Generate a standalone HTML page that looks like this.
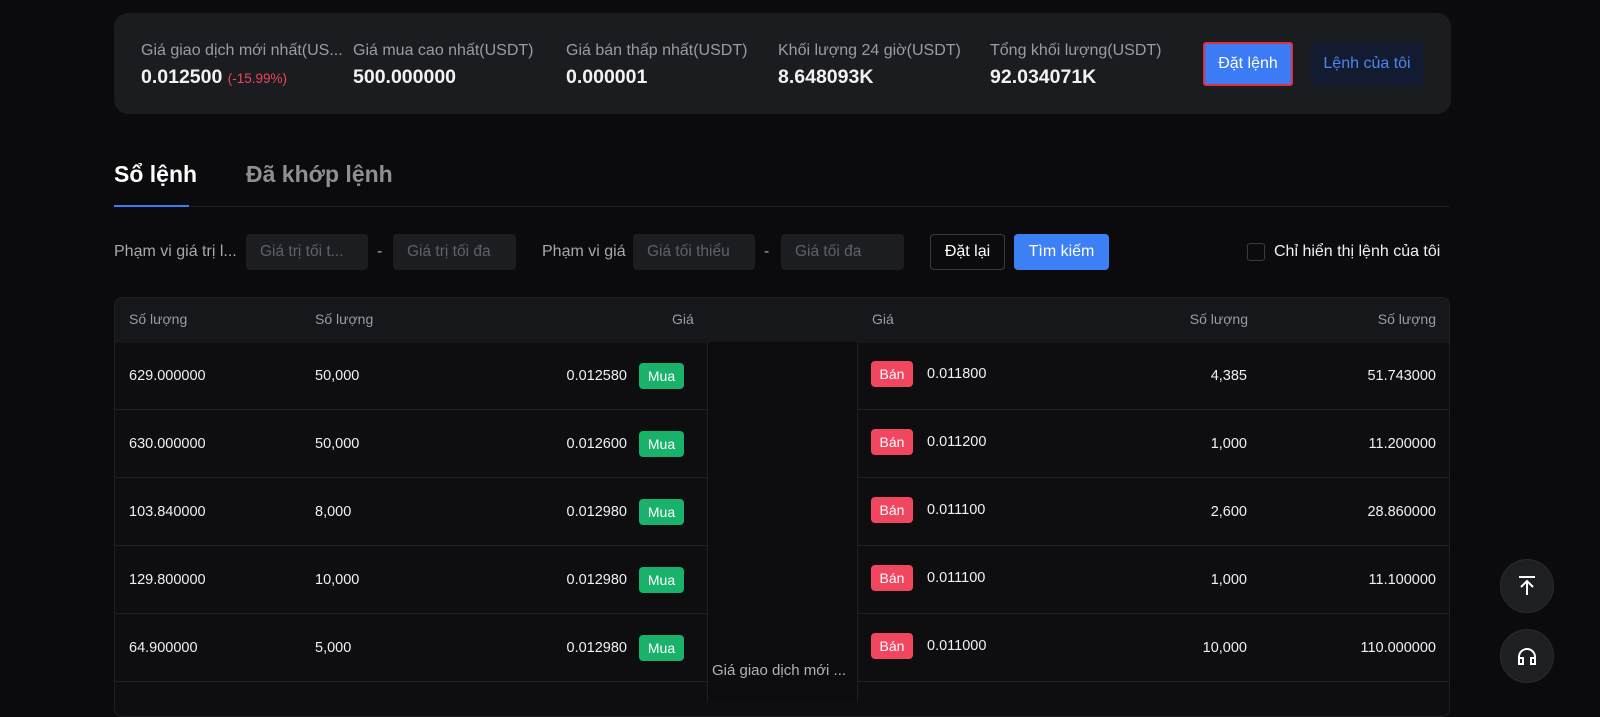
<!DOCTYPE html>
<html><head><meta charset="utf-8"><style>
*{margin:0;padding:0;box-sizing:border-box}
body{width:1600px;height:699px;background:#0b0b0d;font-family:"Liberation Sans",sans-serif;color:#e8e8ea;position:relative;overflow:hidden}
.a{position:absolute;white-space:nowrap}
.lbl{font-size:16px;color:#9a9ca3}
.val{font-size:19.5px;font-weight:bold;color:#f2f2f4}
.inp{position:absolute;top:234px;height:36px;background:#1c1d20;border-radius:4px;color:#5f6168;font-size:15.5px;line-height:36px;padding-left:14px}
.th{font-size:14px;color:#9a9ca3;top:311px}
.td{font-size:14.5px;color:#f0f0f2}
.tag{position:absolute;width:45px;height:26px;border-radius:4px;font-size:14px;line-height:26px;text-align:center;color:#fff}
.mua{background:#18b26b}.ban{background:#f0465f}
.hl{position:absolute;height:1px;background:#1f2023}
.circ{position:absolute;left:1500px;width:54px;height:54px;border-radius:50%;background:#1e1f22;border:1px solid #2a2b2e}
.f15{font-size:16px}
</style></head><body>
<div class="a" style="left:114px;top:13px;width:1337px;height:101px;background:#1b1c1f;border-radius:14px"></div>
<div class="a lbl" style="left:141px;top:42px">Giá giao dịch mới nhất(US...</div>
<div class="a val" style="left:141px;top:66px">0.012500 <span style="font-size:13.5px;font-weight:normal;color:#f0465f">(-15.99%)</span></div>
<div class="a lbl" style="left:353px;top:42px">Giá mua cao nhất(USDT)</div>
<div class="a val" style="left:353px;top:66px">500.000000</div>
<div class="a lbl" style="left:566px;top:42px">Giá bán thấp nhất(USDT)</div>
<div class="a val" style="left:566px;top:66px">0.000001</div>
<div class="a lbl" style="left:778px;top:42px">Khối lượng 24 giờ(USDT)</div>
<div class="a val" style="left:778px;top:66px">8.648093K</div>
<div class="a lbl" style="left:990px;top:42px">Tổng khối lượng(USDT)</div>
<div class="a val" style="left:990px;top:66px">92.034071K</div>
<div class="a f15" style="left:1203px;top:42px;width:90px;height:44px;background:#3b7bf5;border:2px solid #e0323c;border-radius:3px;color:#fff;line-height:40px;text-align:center">Đặt lệnh</div>
<div class="a f15" style="left:1310px;top:42px;width:114px;height:44px;background:#121b30;border-radius:4px;color:#4c86f0;line-height:44px;text-align:center">Lệnh của tôi</div>

<div class="a" style="left:114px;top:161px;font-size:23px;font-weight:bold;color:#fff">Sổ lệnh</div>
<div class="a" style="left:246px;top:161px;font-size:23px;font-weight:bold;color:#8d8f95">Đã khớp lệnh</div>
<div class="hl" style="left:114px;top:206px;width:1336px;background:#1c1d20"></div>
<div class="a" style="left:114px;top:205px;width:75px;height:2px;background:#3b7bf5"></div>

<div class="a f15" style="left:114px;top:243px;color:#a6a8ae">Phạm vi giá trị l...</div>
<div class="inp" style="left:246px;width:122px">Giá trị tối t...</div>
<div class="a f15" style="left:377px;top:243px;color:#a6a8ae">-</div>
<div class="inp" style="left:393px;width:123px">Giá trị tối đa</div>
<div class="a f15" style="left:542px;top:243px;color:#a6a8ae">Phạm vi giá</div>
<div class="inp" style="left:633px;width:122px">Giá tối thiểu</div>
<div class="a f15" style="left:764px;top:243px;color:#a6a8ae">-</div>
<div class="inp" style="left:781px;width:123px">Giá tối đa</div>
<div class="a f15" style="left:930px;top:234px;width:75px;height:36px;border:1px solid #3a3b3f;border-radius:4px;line-height:34px;text-align:center;color:#fff">Đặt lại</div>
<div class="a f15" style="left:1014px;top:234px;width:95px;height:36px;background:#3d80f6;border-radius:4px;line-height:36px;text-align:center;color:#fff">Tìm kiếm</div>
<div class="a" style="left:1247px;top:243px;width:18px;height:18px;border:1px solid #3a3b3f;border-radius:3px"></div>
<div class="a f15" style="left:1274px;top:243px;color:#f0f0f2">Chỉ hiển thị lệnh của tôi</div>

<div class="a" style="left:114px;top:297px;width:1336px;height:420px;border:1px solid #1f2023;border-radius:8px;background:#0e0e11;overflow:hidden">
<div class="a" style="left:0;top:0;width:1336px;height:45px;background:#16171a"></div>
</div>
<div class="a" style="left:707px;top:342px;width:1px;height:360px;background:#1f2023"></div>
<div class="a" style="left:857px;top:342px;width:1px;height:360px;background:#1f2023"></div>
<div class="a" style="left:708px;top:342px;width:149px;height:360px;background:#0c0c0f"></div>
<div class="a th" style="left:129px">Số lượng</div>
<div class="a th" style="left:315px">Số lượng</div>
<div class="a th" style="left:672px">Giá</div>
<div class="a th" style="left:872px">Giá</div>
<div class="a th" style="right:352px">Số lượng</div>
<div class="a th" style="right:164px">Số lượng</div>
<div class="a" style="left:712px;top:662px;font-size:15px;color:#b0b2b8">Giá giao dịch mới ...</div>

<div class="hl" style="left:114px;top:409px;width:593px"></div><div class="hl" style="left:858px;top:409px;width:592px"></div>
<div class="hl" style="left:114px;top:477px;width:593px"></div><div class="hl" style="left:858px;top:477px;width:592px"></div>
<div class="hl" style="left:114px;top:545px;width:593px"></div><div class="hl" style="left:858px;top:545px;width:592px"></div>
<div class="hl" style="left:114px;top:613px;width:593px"></div><div class="hl" style="left:858px;top:613px;width:592px"></div>
<div class="hl" style="left:114px;top:681px;width:593px"></div><div class="hl" style="left:858px;top:681px;width:592px"></div>

<div id="rows"></div>
<script>
var L=[["629.000000","50,000","0.012580"],["630.000000","50,000","0.012600"],["103.840000","8,000","0.012980"],["129.800000","10,000","0.012980"],["64.900000","5,000","0.012980"]];
var R=[["0.011800","4,385","51.743000"],["0.011200","1,000","11.200000"],["0.011100","2,600","28.860000"],["0.011100","1,000","11.100000"],["0.011000","10,000","110.000000"]];
var h="";
for(var i=0;i<5;i++){var y=368+68*i;
h+='<div class="a td" style="left:129px;top:'+y+'px">'+L[i][0]+'</div>';
h+='<div class="a td" style="left:315px;top:'+y+'px">'+L[i][1]+'</div>';
h+='<div class="a td" style="right:973px;top:'+y+'px">'+L[i][2]+'</div>';
h+='<div class="tag mua" style="left:639px;top:'+(y-5)+'px">Mua</div>';
h+='<div class="tag ban" style="left:871px;top:'+(y-7)+'px;width:42px">Bán</div>';
h+='<div class="a td" style="left:927px;top:'+(y-2)+'px">'+R[i][0]+'</div>';
h+='<div class="a td" style="right:353px;top:'+y+'px">'+R[i][1]+'</div>';
h+='<div class="a td" style="right:164px;top:'+y+'px">'+R[i][2]+'</div>';}
document.getElementById("rows").innerHTML=h;
</script>

<div class="circ" style="top:559px"><svg width="54" height="54" viewBox="0 0 54 54" style="position:absolute;left:-1px;top:-1px" fill="none" stroke="#fff" stroke-width="2"><path d="M19 18h16M27 36V22M21 28l6-6 6 6"/></svg></div>
<div class="circ" style="top:629px"><svg width="54" height="54" viewBox="0 0 54 54" style="position:absolute;left:-1px;top:-1px" fill="none" stroke="#fff" stroke-width="2"><path d="M19 33v-5a8 8 0 0 1 16 0v5"/><rect x="19" y="29" width="4" height="6"/><rect x="31" y="29" width="4" height="6"/></svg></div>
</body></html>
